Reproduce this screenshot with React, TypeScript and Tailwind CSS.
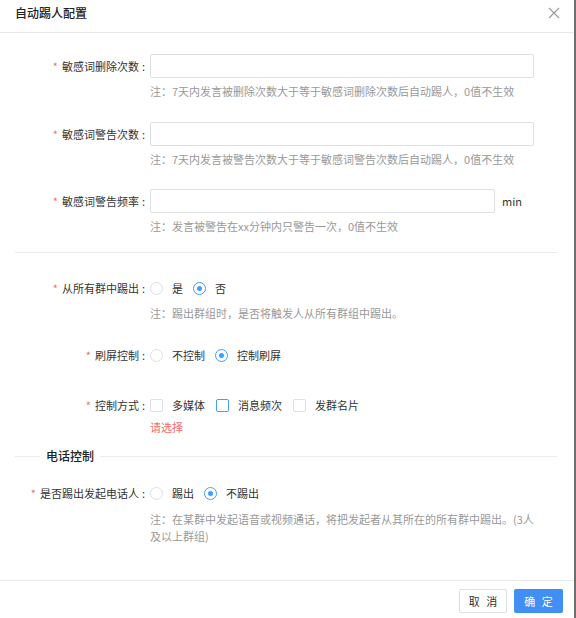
import { useState } from "react";

const font = { fontFamily: '"Noto Sans CJK SC", "Noto Sans", sans-serif' };

// label column: red star + text, right aligned to x=146
const Label = ({ text }: { text: string }) => (
  <div className="w-[150px] shrink-0 pr-[5px] text-right text-[11px] leading-[24px] text-[#333]">
    <span className="mr-[4px] text-[#f56c6c]">*</span>
    {text}
    <span className="ml-[3px]">:</span>
  </div>
);

const Note = ({ children, className = "" }: { children: React.ReactNode; className?: string }) => (
  <div className={`text-[11px] text-[#999] ${className}`}>{children}</div>
);

const Radio = ({ checked, label, onClick }: { checked: boolean; label: string; onClick: () => void }) => (
  <label className="mr-[10px] flex cursor-pointer items-center" onClick={onClick}>
    <span
      className={`flex h-[13px] w-[13px] items-center justify-center rounded-full border ${
        checked ? "border-[#409eff]" : "border-[#dcdfe6]"
      } bg-white`}
    >
      {checked && <span className="h-[5px] w-[5px] rounded-full bg-[#409eff]" />}
    </span>
    <span className="pl-[9px] text-[11px] text-[#333]">{label}</span>
  </label>
);

const Checkbox = ({ focused, label }: { focused?: boolean; label: string }) => (
  <label className="mr-[11px] flex cursor-pointer items-center">
    <span
      className={`h-[13px] w-[13px] rounded-[2px] border bg-white ${
        focused ? "border-[#409eff]" : "border-[#dcdfe6]"
      }`}
    />
    <span className="pl-[9px] text-[11px] text-[#333]">{label}</span>
  </label>
);

const Input = ({ className = "" }: { className?: string }) => (
  <input className={`block h-[24px] rounded-[2px] border border-[#dcdfe6] bg-white px-[8px] text-[11px] outline-none ${className}`} />
);

export default function App() {
  const [kickAll, setKickAll] = useState(false);
  const [flood, setFlood] = useState(true);
  const [kickCaller, setKickCaller] = useState(false);

  return (
    <div style={font} className="flex h-[618px] w-[576px] flex-col border-r-2 border-[#6e6e6e] bg-white">
      {/* header */}
      <div className="flex h-[33px] shrink-0 items-start justify-between border-b border-[#e8e8e8] pl-[15px] pr-[14px] pt-[5px]">
        <span className="text-[12px] font-medium leading-[16px] text-[#222]">自动踢人配置</span>
        <svg width="12" height="12" viewBox="0 0 12 12" className="mt-[2px]">
          <path d="M1 1L11 11M11 1L1 11" stroke="#9a9a9a" strokeWidth="1.1" />
        </svg>
      </div>

      {/* body */}
      <div className="flex-1 pl-[15px] pr-[17px] pt-[21px]">
        <div className="-ml-[15px]">
          <div className="flex">
            <Label text="敏感词删除次数" />
            <div>
              <Input className="w-[384px]" />
              <Note className="mt-[4px] leading-[18px]">注：7天内发言被删除次数大于等于敏感词删除次数后自动踢人，0值不生效</Note>
            </div>
          </div>

          <div className="mt-[22px] flex">
            <Label text="敏感词警告次数" />
            <div>
              <Input className="w-[384px]" />
              <Note className="mt-[4px] leading-[18px]">注：7天内发言被警告次数大于等于敏感词警告次数后自动踢人，0值不生效</Note>
            </div>
          </div>

          <div className="mt-[21px] flex">
            <Label text="敏感词警告频率" />
            <div>
              <div className="flex items-center">
                <Input className="w-[345px]" />
                <span className="ml-[7px] text-[11px] text-[#333]">min</span>
              </div>
              <Note className="mt-[4px] leading-[18px]">注：发言被警告在xx分钟内只警告一次，0值不生效</Note>
            </div>
          </div>
        </div>

        <div className="mt-[17px] h-px bg-[#ebebeb]" />

        <div className="-ml-[15px]">
          <div className="mt-[23px] flex">
            <Label text="从所有群中踢出" />
            <div>
              <div className="flex h-[24px] items-center">
                <Radio checked={kickAll} label="是" onClick={() => setKickAll(true)} />
                <Radio checked={!kickAll} label="否" onClick={() => setKickAll(false)} />
              </div>
              <Note className="mt-[4px] leading-[18px]">注：踢出群组时，是否将触发人从所有群组中踢出。</Note>
            </div>
          </div>

          <div className="mt-[21px] flex">
            <Label text="刷屏控制" />
            <div className="flex h-[24px] items-center">
              <Radio checked={!flood} label="不控制" onClick={() => setFlood(false)} />
              <Radio checked={flood} label="控制刷屏" onClick={() => setFlood(true)} />
            </div>
          </div>

          <div className="mt-[26px] flex">
            <Label text="控制方式" />
            <div>
              <div className="flex h-[24px] items-center">
                <Checkbox label="多媒体" />
                <Checkbox focused label="消息频次" />
                <Checkbox label="发群名片" />
              </div>
              <div className="mt-[4px] text-[11px] leading-[12px] text-[#f56c6c]">请选择</div>
            </div>
          </div>
        </div>

        {/* section: phone control */}
        <div className="mt-[14px] flex items-center">
          <div className="h-px w-[25px] bg-[#ebebeb]" />
          <span className="px-[6px] text-[12px] font-medium leading-[18px] text-[#222]">电话控制</span>
          <div className="h-px flex-1 bg-[#ebebeb]" />
        </div>

        <div className="-ml-[15px]">
          <div className="mt-[16px] flex">
            <Label text="是否踢出发起电话人" />
            <div>
              <div className="flex h-[24px] items-center">
                <Radio checked={kickCaller} label="踢出" onClick={() => setKickCaller(true)} />
                <Radio checked={!kickCaller} label="不踢出" onClick={() => setKickCaller(false)} />
              </div>
              <Note className="mt-[6px] w-[384px] leading-[17px]">
                <span className="whitespace-nowrap">注：在某群中发起语音或视频通话，将把发起者从其所在的所有群中踢出。(3人</span>
                <br />
                及以上群组)
              </Note>
            </div>
          </div>
        </div>
      </div>

      {/* footer */}
      <div className="flex h-[38px] shrink-0 items-start justify-end gap-[7px] border-t border-[#e8e8e8] pr-[11px] pt-[8px]">
        <button className="h-[24px] w-[48px] rounded-[2px] border border-[#dcdfe6] bg-white pl-[2px] text-[11px] tracking-[2px] text-[#333]">取 消</button>
        <button className="h-[24px] w-[49px] rounded-[2px] bg-[#418ef5] pl-[2px] text-[11px] tracking-[2px] text-white">确 定</button>
      </div>
    </div>
  );
}
